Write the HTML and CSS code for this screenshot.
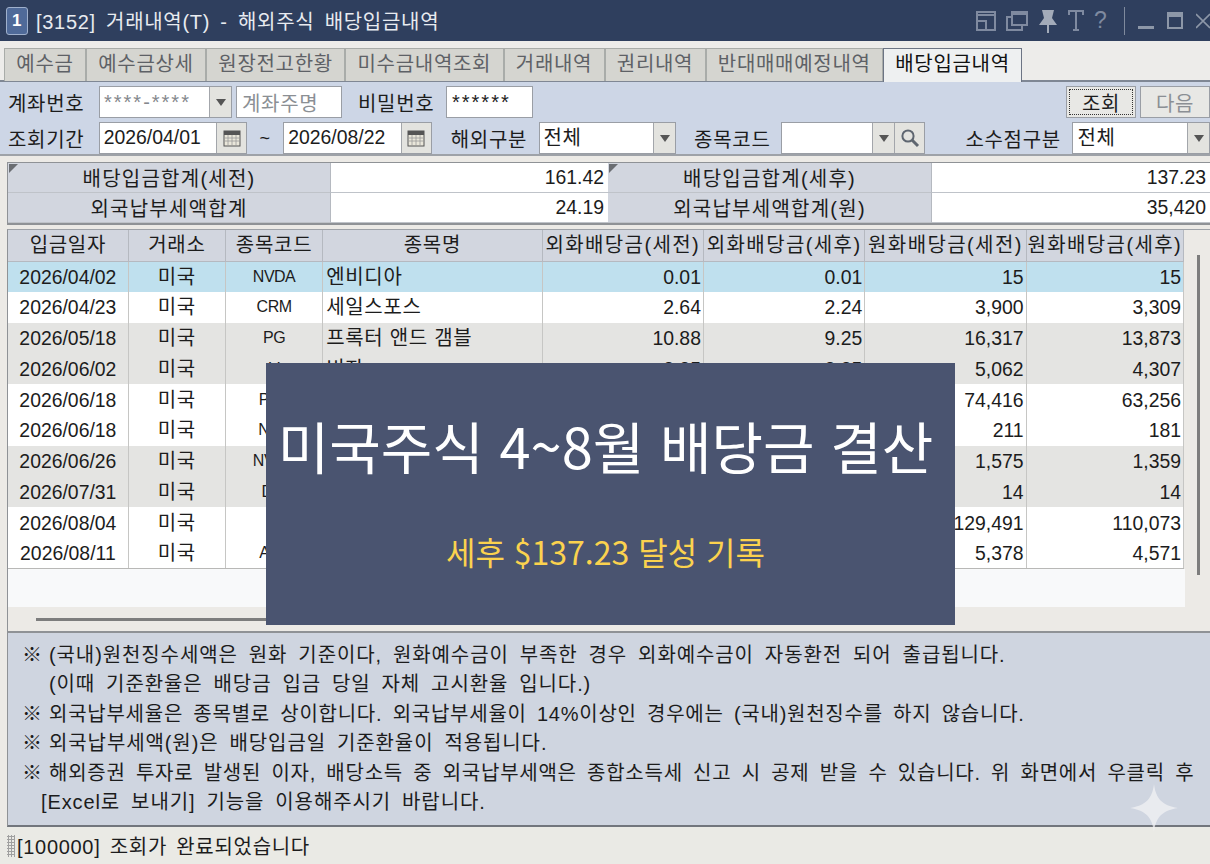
FILE: index.html
```html
<!DOCTYPE html>
<html lang="ko">
<head>
    <meta charset="UTF-8">
    <title>[3152] 거래내역(T) - 해외주식 배당입금내역</title>
    <link rel="stylesheet" href="styles.css">
</head>
<body>
    <div class="window">
        <header class="titlebar">
            <span class="win-num">1</span>
            <span class="win-title">[3152] 거래내역(T) - 해외주식 배당입금내역</span>
            <div class="win-tools">
                <div class="tool-group">
                    <svg width="20" height="24" viewBox="0 0 20 24"><path d="M1 3h18v18H1zM1 12h9v9M1 6h18" fill="none" stroke="#7f8aa0" stroke-width="2"/></svg>
                    <svg width="22" height="24" viewBox="0 0 22 24"><path d="M6 3h15v13H6zM6 5h15M6 8H1v13h15v-5" fill="none" stroke="#7f8aa0" stroke-width="2"/></svg>
                    <svg width="20" height="26" viewBox="0 0 20 26"><path d="M4 2h12l-2 8 5 7H1l5-7zM9 17h2v8H9z" fill="#a3abb9"/></svg>
                    <svg width="16" height="24" viewBox="0 0 16 24"><path d="M1 6V2h14v4M8 2v18M5 21h6" fill="none" stroke="#7f8aa0" stroke-width="2"/></svg>
                    <span class="tool-q">?</span>
                </div>
                <span class="tool-sep"></span>
                <span class="tool-min"></span>
                <span class="tool-max"></span>
                <svg width="14" height="24" viewBox="0 0 14 24"><path d="M0 5l14 14M14 5L0 19" stroke="#8d97a8" stroke-width="1.6"/></svg>
            </div>
        </header>

        <nav class="tabs">
            <a class="tab">예수금</a>
            <a class="tab">예수금상세</a>
            <a class="tab">원장전고한황</a>
            <a class="tab">미수금내역조회</a>
            <a class="tab">거래내역</a>
            <a class="tab">권리내역</a>
            <a class="tab">반대매매예정내역</a>
            <a class="tab active">배당입금내역</a>
        </nav>

        <section class="search">
            <div class="search-row">
                <label class="lbl lbl-first">계좌번호</label>
                <div class="combo w-account"><span class="val masked">****-****</span><span class="arrow"></span></div>
                <div class="input w-name placeholder">계좌주명</div>
                <label class="lbl lbl-pw">비밀번호</label>
                <div class="input w-pw stars">******</div>
                <div class="buttons">
                    <button class="btn focus">조회</button>
                    <button class="btn off">다음</button>
                </div>
            </div>
            <div class="search-row">
                <label class="lbl lbl-first">조회기간</label>
                <div class="combo w-date"><span class="val digits">2026/04/01</span><span class="cal"><svg width="18" height="18" viewBox="0 0 18 18"><rect x="1" y="2" width="16" height="15" fill="#e9e6da" stroke="#555"/><rect x="1" y="2" width="16" height="4" fill="#555"/><path d="M1 9h16M1 12h16M5 6v11M9 6v11M13 6v11" stroke="#999" stroke-width=".8"/></svg></span></div>
                <span class="tilde">~</span>
                <div class="combo w-date"><span class="val digits">2026/08/22</span><span class="cal"><svg width="18" height="18" viewBox="0 0 18 18"><rect x="1" y="2" width="16" height="15" fill="#e9e6da" stroke="#555"/><rect x="1" y="2" width="16" height="4" fill="#555"/><path d="M1 9h16M1 12h16M5 6v11M9 6v11M13 6v11" stroke="#999" stroke-width=".8"/></svg></span></div>
                <label class="lbl lbl-area">해외구분</label>
                <div class="combo w-area"><span class="val">전체</span><span class="arrow"></span></div>
                <label class="lbl lbl-code">종목코드</label>
                <div class="combo w-code"><span class="val"></span><span class="arrow"></span><span class="find"><svg width="20" height="20" viewBox="0 0 20 20"><circle cx="8" cy="8" r="5.6" fill="none" stroke="#5e6670" stroke-width="2"/><path d="M12 12l6 6" stroke="#5e6670" stroke-width="3"/></svg></span></div>
                <label class="lbl lbl-dec">소수점구분</label>
                <div class="combo w-dec"><span class="val">전체</span><span class="arrow"></span></div>
            </div>
        </section>

        <section class="summary">
            <div class="sum-cell head flag">배당입금합계(세전)</div>
            <div class="sum-cell num">161.42</div>
            <div class="sum-cell head flag">배당입금합계(세후)</div>
            <div class="sum-cell num">137.23</div>
            <div class="sum-cell head">외국납부세액합계</div>
            <div class="sum-cell num">24.19</div>
            <div class="sum-cell head">외국납부세액합계(원)</div>
            <div class="sum-cell num">35,420</div>
        </section>

        <section class="grid-wrap">
            <table class="grid">
                <colgroup>
                    <col class="c-date"><col class="c-mkt"><col class="c-code"><col class="c-name">
                    <col class="c-amt"><col class="c-amt"><col class="c-amt"><col class="c-amt2">
                </colgroup>
                <thead>
                    <tr><th>입금일자</th><th>거래소</th><th>종목코드</th><th>종목명</th><th class="wide">외화배당금(세전)</th><th class="wide">외화배당금(세후)</th><th class="wide">원화배당금(세전)</th><th class="wide">원화배당금(세후)</th></tr>
                </thead>
                <tbody>
                    <tr class="selected"><td class="digits">2026/04/02</td><td>미국</td><td class="code">NVDA</td><td class="left">엔비디아</td><td class="num">0.01</td><td class="num">0.01</td><td class="num">15</td><td class="num">15</td></tr>
                    <tr><td class="digits">2026/04/23</td><td>미국</td><td class="code">CRM</td><td class="left">세일스포스</td><td class="num">2.64</td><td class="num">2.24</td><td class="num">3,900</td><td class="num">3,309</td></tr>
                    <tr class="alt"><td class="digits">2026/05/18</td><td>미국</td><td class="code">PG</td><td class="left">프록터 앤드 갬블</td><td class="num">10.88</td><td class="num">9.25</td><td class="num">16,317</td><td class="num">13,873</td></tr>
                    <tr class="alt"><td class="digits">2026/06/02</td><td>미국</td><td class="code">V</td><td class="left">비자</td><td class="num">3.35</td><td class="num">2.85</td><td class="num">5,062</td><td class="num">4,307</td></tr>
                    <tr><td class="digits">2026/06/18</td><td>미국</td><td class="code">PEP</td><td class="left"></td><td class="num"></td><td class="num"></td><td class="num">74,416</td><td class="num">63,256</td></tr>
                    <tr><td class="digits">2026/06/18</td><td>미국</td><td class="code">NKE</td><td class="left"></td><td class="num"></td><td class="num"></td><td class="num">211</td><td class="num">181</td></tr>
                    <tr class="alt"><td class="digits">2026/06/26</td><td>미국</td><td class="code">NVDA</td><td class="left"></td><td class="num"></td><td class="num"></td><td class="num">1,575</td><td class="num">1,359</td></tr>
                    <tr class="alt"><td class="digits">2026/07/31</td><td>미국</td><td class="code">DIS</td><td class="left"></td><td class="num"></td><td class="num"></td><td class="num">14</td><td class="num">14</td></tr>
                    <tr><td class="digits">2026/08/04</td><td>미국</td><td class="code">O</td><td class="left"></td><td class="num"></td><td class="num"></td><td class="num">129,491</td><td class="num">110,073</td></tr>
                    <tr><td class="digits">2026/08/11</td><td>미국</td><td class="code">ABT</td><td class="left"></td><td class="num"></td><td class="num"></td><td class="num">5,378</td><td class="num">4,571</td></tr>
                </tbody>
            </table>
            <div class="grid-empty"></div>
            <div class="hscroll"><span class="hthumb"></span></div>
            <span class="vthumb"></span>
        </section>

        <section class="notes">
            <p><span class="mark">※</span>(국내)원천징수세액은 원화 기준이다, 원화예수금이 부족한 경우 외화예수금이 자동환전 되어 출급됩니다.</p>
            <p class="sub">(이때 기준환율은 배당금 입금 당일 자체 고시환율 입니다.)</p>
            <p class="tight"><span class="mark">※</span>외국납부세율은 종목별로 상이합니다. 외국납부세율이 14%이상인 경우에는 (국내)원천징수를 하지 않습니다.</p>
            <p><span class="mark">※</span>외국납부세액(원)은 배당입금일 기준환율이 적용됩니다.</p>
            <p class="tight"><span class="mark">※</span>해외증권 투자로 발생된 이자, 배당소득 중 외국납부세액은 종합소득세 신고 시 공제 받을 수 있습니다. 위 화면에서 우클릭 후</p>
            <p class="sub2">[Excel로 보내기] 기능을 이용해주시기 바랍니다.</p>
        </section>

        <footer class="status"><span class="grip"></span>[100000] 조회가 완료되었습니다</footer>

        <div class="banner">
            <h1>미국주식 4~8월 배당금 결산</h1>
            <p>세후 $137.23 달성 기록</p>
        </div>
        <svg class="sparkle" width="48" height="48" viewBox="0 0 50 52" preserveAspectRatio="none"><path d="M25 0C27 16 33 23 50 26 33 29 27 36 25 52 23 36 17 29 0 26 17 23 23 16 25 0Z" fill="#f1f2f4" fill-opacity=".75"/></svg>
    </div>
</body>
</html>
```
FILE: styles.css
```css
/* Global */
* {
    box-sizing: border-box;
}

html, body {
    margin: 0;
    padding: 0;
    height: 100%;
    overflow: hidden;
}

body {
    font-family: "Liberation Sans", "Noto Sans CJK KR", sans-serif;
    font-size: 20px;
    letter-spacing: 0.7px;
    color: #1c1c1c;
    background: #eceae6;
}

.window {
    position: relative;
    width: 1210px;
    height: 864px;
    display: flex;
    flex-direction: column;
    background: #eceae6;
}

.digits {
    font-size: 19.4px;
    letter-spacing: 0;
}

/* Title bar */
.titlebar {
    height: 48px;
    flex: none;
    display: flex;
    align-items: center;
    padding: 0 0 0 6px;
    background: #2f3f5e;
    color: #e8ebf0;
    border-bottom: 7px solid #edecea;
}

.win-num {
    width: 22px;
    height: 28px;
    margin-right: 8px;
    border-radius: 3px;
    border: 1px solid #9fb0cc;
    background: #4f6a99;
    color: #fff;
    font-size: 17px;
    font-weight: bold;
    line-height: 26px;
    text-align: center;
}

.win-title {
    word-spacing: 4px;
    white-space: pre;
}

.win-tools {
    margin-left: auto;
    display: flex;
    align-items: center;
    gap: 13px;
}

.tool-group {
    display: flex;
    align-items: center;
    gap: 10px;
    margin-right: 3px;
}

.tool-q {
    color: #7f8aa0;
    font-size: 23px;
    width: 14px;
}

.tool-sep {
    width: 1px;
    height: 28px;
    background: #7f8a9d;
}

.tool-min {
    width: 16px;
    height: 3px;
    margin-top: 14px;
    background: #8d97a8;
}

.tool-max {
    width: 16px;
    height: 17px;
    border: 2px solid #8d97a8;
    border-top-width: 5px;
}

/* Tabs */
.tabs {
    height: 34px;
    flex: none;
    display: flex;
    padding-left: 4px;
    border-bottom: 2px solid #7f8794;
    background: #edecea;
}

.tab {
    height: 33px;
    padding: 0 11.3px;
    border: 1px solid #a9aca9;
    border-bottom: none;
    background: #d5d5d0;
    color: #5e6166;
    line-height: 31px;
    white-space: nowrap;
}

.tab.active {
    height: 34px;
    background: #eef0f1;
    color: #111;
    border: 1px solid #6c7484;
    border-bottom: none;
}

/* Search */
.search {
    height: 74px;
    flex: none;
    display: flex;
    flex-direction: column;
    gap: 4px;
    padding: 4px 0 0 8px;
    background: #cdd6e6;
    border-bottom: 2px solid #9ea2a8;
}

.search-row {
    height: 32px;
    display: flex;
    align-items: center;
}

.lbl {
    width: 78px;
    white-space: nowrap;
}

.lbl-first {
    width: 91px;
}

.lbl-pw {
    margin: 0 10px 0 16px;
}

.lbl-area {
    margin: 0 10px 0 19px;
}

.lbl-code {
    margin: 0 9px 0 18px;
}

.lbl-dec {
    width: 94px;
    margin: 0 13px 0 40px;
}

.combo, .input {
    height: 32px;
    display: flex;
    align-items: center;
    background: #fff;
    border: 1px solid #9a9ea5;
    white-space: nowrap;
}

.input {
    padding-left: 5px;
}

.val {
    flex: 1;
    padding-left: 4px;
    line-height: 1;
}

.masked {
    color: #85888d;
    letter-spacing: 2px;
}

.placeholder {
    color: #8b8f94;
}

.stars {
    letter-spacing: 2px;
    color: #222;
}

.w-account {
    width: 133px;
    margin-right: 4px;
}

.w-name {
    width: 106px;
}

.w-pw {
    width: 87px;
}

.w-date {
    width: 149px;
}

.w-area {
    width: 138px;
}

.w-code {
    width: 145px;
}

.w-dec {
    width: 138px;
}

.arrow, .cal, .find {
    height: 100%;
    flex: none;
    display: flex;
    align-items: center;
    justify-content: center;
    background: #e3e3df;
    border-left: 1px solid #a3a6ab;
}

.arrow {
    width: 22px;
}

.arrow::after {
    content: "";
    border-left: 5px solid transparent;
    border-right: 5px solid transparent;
    border-top: 7px solid #555;
}

.cal, .find {
    width: 30px;
}

.tilde {
    width: 36px;
    text-align: center;
    font-size: 18px;
}

.buttons {
    margin-left: auto;
    display: flex;
    gap: 4px;
}

.btn {
    width: 70px;
    height: 32px;
    padding: 0;
    border: 1px solid #9a9ea5;
    background: #e8e8e5;
    font: inherit;
    letter-spacing: inherit;
    color: #1c1c1c;
}

.btn.focus {
    outline: 1px dotted #333;
    outline-offset: -4px;
}

.btn.off {
    color: #8b8f94;
}

/* Summary */
.summary {
    flex: none;
    margin: 6px 0 0 7px;
    display: grid;
    grid-template-columns: 323px 277px 324px 278px;
    grid-template-rows: 30px 30px;
    border-top: 1px solid #8f9296;
    border-bottom: 2px solid #8f9296;
    border-left: 1px solid #8f9296;
    background: #fff;
}

.sum-cell {
    display: flex;
    align-items: center;
    border-bottom: 1px solid #bfc3c9;
}

.sum-cell.head {
    position: relative;
    justify-content: center;
    background: #d2d6df;
    border-right: 1px solid #b5b9c0;
    letter-spacing: 1.25px;
}

.sum-cell.num {
    justify-content: flex-end;
    padding-right: 4px;
    background: #fff;
    font-size: 19.4px;
    letter-spacing: 0;
}

.flag::before {
    content: "";
    position: absolute;
    left: 1px;
    top: 1px;
    border-top: 9px solid #6a6d72;
    border-right: 9px solid transparent;
}

/* Grid */
.grid-wrap {
    position: relative;
    flex: none;
    height: 404px;
    margin: 4px 0 0 7px;
    display: flex;
    flex-direction: column;
    background: #eceae6;
    border-top: 1px solid #9ea2a8;
    border-bottom: 2px solid #8f9296;
    border-left: 1px solid #8f9296;
}

.grid {
    width: 1176px;
    table-layout: fixed;
    border-collapse: collapse;
    line-height: 24px;
}

.c-date {
    width: 120px;
}

.c-mkt, .c-code {
    width: 97px;
}

.c-name {
    width: 219px;
}

.c-amt {
    width: 161px;
}

.c-amt2 {
    width: 157px;
}

.grid th {
    height: 31px;
    padding: 0;
    background: #d2d6df;
    border-right: 1px solid #b5b9c0;
    border-bottom: 1px solid #b5b9c0;
    font-weight: normal;
    white-space: nowrap;
}

.grid th.wide {
    letter-spacing: 1.4px;
}

.grid td {
    height: 30.8px;
    padding: 0 3px;
    text-align: center;
    border-right: 1px solid #c6c6c4;
    background: #fff;
    white-space: nowrap;
}

.grid td.left {
    text-align: left;
}

.grid td.code {
    font-size: 16px;
    letter-spacing: -0.5px;
}

.grid td.num {
    text-align: right;
    font-size: 19.4px;
    letter-spacing: 0;
    padding-right: 2px;
}

.grid tbody tr:last-child td {
    border-bottom: 1px solid #b8b8b6;
}

.grid .selected td {
    background: #bfe0ee;
}

.grid .alt td {
    background: #e4e4e2;
}

.grid-empty {
    width: 1177px;
    height: 38px;
    background: #f8f9fa;
}

.hscroll {
    flex: 1;
    position: relative;
}

.hthumb {
    position: absolute;
    left: 28px;
    top: 11px;
    width: 320px;
    height: 3px;
    background: #7d7d7d;
}

.vthumb {
    position: absolute;
    left: 1189px;
    top: 25px;
    width: 3px;
    height: 320px;
    background: #7d7d7d;
}

/* Notes */
.notes {
    height: 194px;
    flex: none;
    margin: 0 0 0 7px;
    padding: 8px 0 0 14px;
    background: #cfd5e0;
    border-left: 1px solid #8f9296;
    border-bottom: 2px solid #72767d;
}

.notes p {
    margin: 0;
    height: 29.4px;
    line-height: 29.4px;
    letter-spacing: 0.9px;
    word-spacing: 4.5px;
    white-space: pre;
}

.notes .tight {
    letter-spacing: 0.75px;
    word-spacing: 4px;
}

.mark {
    display: inline-block;
    width: 27px;
}

.notes .sub {
    padding-left: 27px;
}

.notes .sub2 {
    padding-left: 19px;
}

/* Status */
.status {
    flex: 1;
    display: flex;
    align-items: center;
    padding-left: 7px;
    background: #eaeae5;
    word-spacing: 3px;
    white-space: pre;
}

.grip {
    width: 8px;
    height: 22px;
    margin-right: 2px;
    background-image: radial-gradient(#a0a0a0 1px, transparent 1.2px);
    background-size: 3px 3px;
}

/* Overlay banner */
.banner {
    position: absolute;
    left: 266px;
    top: 363px;
    width: 689px;
    height: 262px;
    display: flex;
    flex-direction: column;
    align-items: center;
    padding-right: 10px;
    background: #4a5470;
    font-family: "Noto Sans CJK KR", sans-serif;
    letter-spacing: 0;
}

.banner h1 {
    margin: 47px 0 0;
    font-size: 56px;
    font-weight: normal;
    color: #fff;
    line-height: 70px;
    white-space: nowrap;
}

.banner p {
    margin: 51px 0 0;
    font-size: 32px;
    color: #fbd24e;
    line-height: 40px;
}

.sparkle {
    position: absolute;
    left: 1130px;
    top: 784px;
}
```
